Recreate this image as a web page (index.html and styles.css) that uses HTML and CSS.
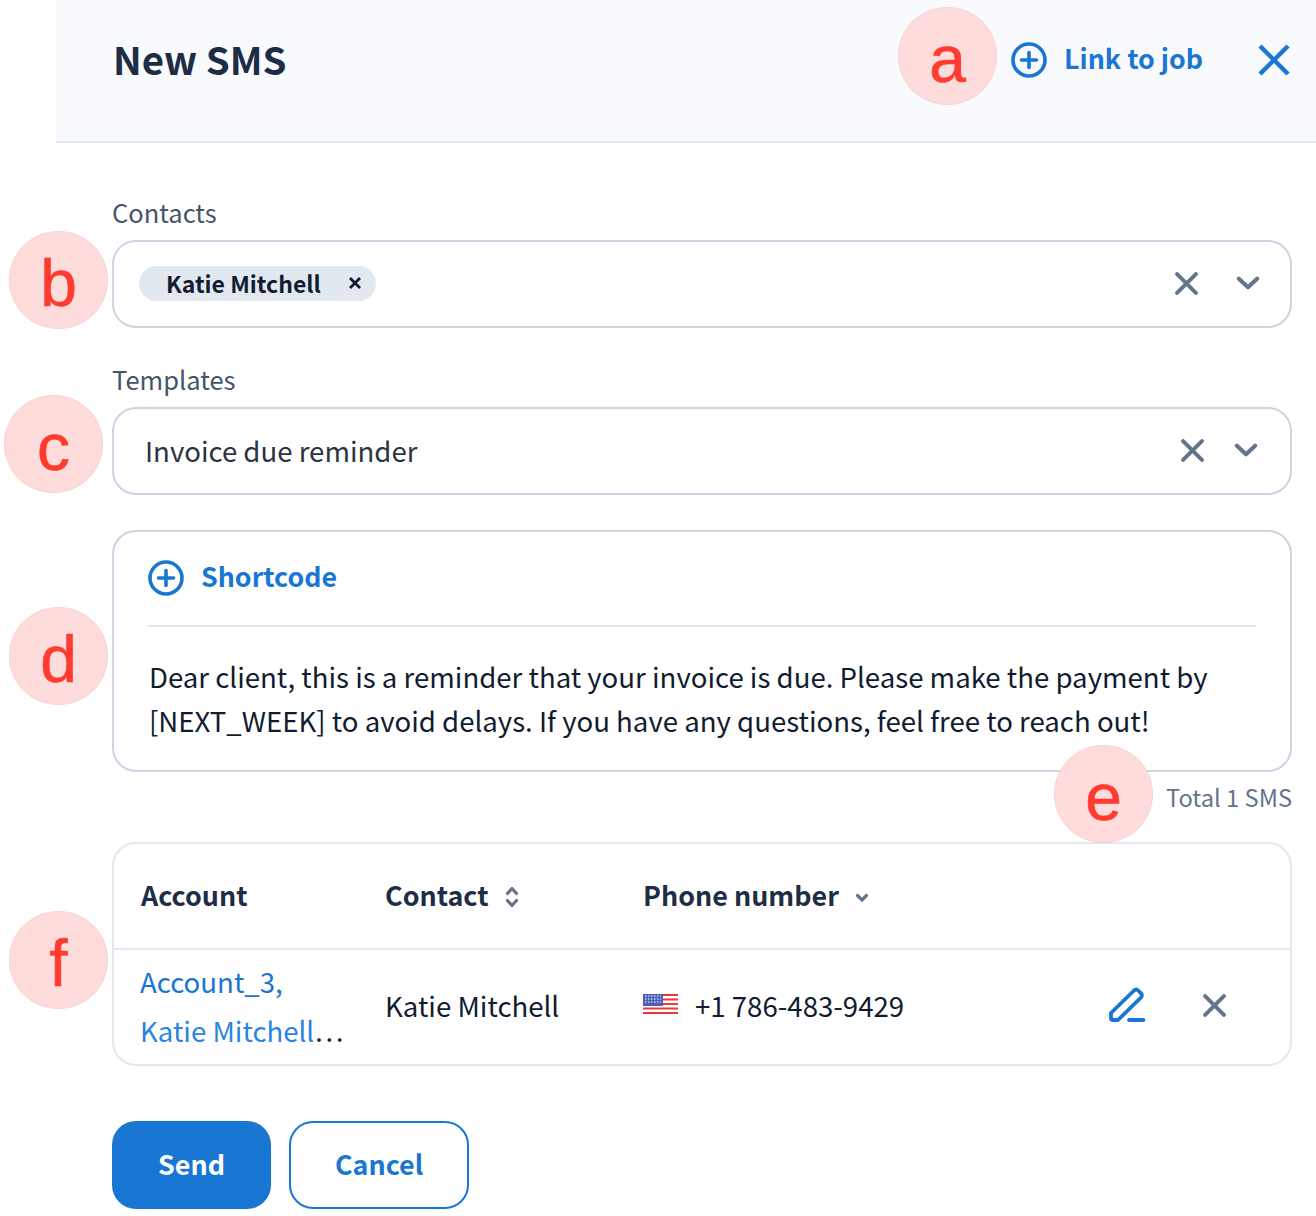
FILE: index.html
```html
<!DOCTYPE html>
<html lang="en">
<head>
    <meta charset="UTF-8">
    <meta name="viewport" content="width=device-width, initial-scale=1.0">
    <title>New SMS</title>
    <link rel="stylesheet" href="styles.css">
</head>
<body>
    <div class="page">
        <header class="header">
            <h1 class="title">New SMS</h1>
            <a class="link link-job">
                <svg class="plus-icon" viewBox="0 0 36 36"><circle cx="18" cy="18" r="16" fill="none" stroke="currentColor" stroke-width="3.6"/><path d="M18 10.5v15M10.5 18h15" fill="none" stroke="currentColor" stroke-width="3.6" stroke-linecap="round"/></svg>
                <span class="link-text">Link to job</span>
            </a>
            <svg class="close-icon" viewBox="0 0 32 32"><path d="M2 2l28 28M30 2L2 30" fill="none" stroke="currentColor" stroke-width="4.4"/></svg>
        </header>

        <main class="content">
            <label class="field-label">Contacts</label>
            <div class="select">
                <span class="chip">
                    <span>Katie Mitchell</span>
                    <svg class="chip-x" viewBox="0 0 14 14"><path d="M2 2l10 10M12 2L2 12" fill="none" stroke="currentColor" stroke-width="2.8"/></svg>
                </span>
                <svg class="x-icon x-contacts" viewBox="0 0 22 22"><path d="M2 2l18 18M20 2L2 20" fill="none" stroke="currentColor" stroke-width="3.8" stroke-linecap="round"/></svg>
                <svg class="chevron" viewBox="0 0 22 14"><path d="M2.500 2.500l8.500 8 8.500-8" fill="none" stroke="currentColor" stroke-width="3.800" stroke-linecap="round" stroke-linejoin="round"/></svg>
            </div>

            <label class="field-label field-label-second">Templates</label>
            <div class="select select-template">
                <span class="select-value">Invoice due reminder</span>
                <svg class="x-icon x-templates" viewBox="0 0 22 22"><path d="M2 2l18 18M20 2L2 20" fill="none" stroke="currentColor" stroke-width="3.8" stroke-linecap="round"/></svg>
                <svg class="chevron" viewBox="0 0 22 14"><path d="M2.500 2.500l8.500 8 8.500-8" fill="none" stroke="currentColor" stroke-width="3.800" stroke-linecap="round" stroke-linejoin="round"/></svg>
            </div>

            <div class="message">
                <a class="link link-shortcode">
                    <svg class="plus-icon" viewBox="0 0 36 36"><circle cx="18" cy="18" r="16" fill="none" stroke="currentColor" stroke-width="3.6"/><path d="M18 10.5v15M10.5 18h15" fill="none" stroke="currentColor" stroke-width="3.6" stroke-linecap="round"/></svg>
                    <span class="link-text">Shortcode</span>
                </a>
                <p class="message-text">Dear client, this is a reminder that your invoice is due. Please make the payment by [NEXT_WEEK] to avoid delays. If you have any questions, feel free to reach out!</p>
            </div>
            <div class="total">Total 1 SMS</div>

            <div class="table-wrap">
                <table class="table">
                    <thead>
                        <tr>
                            <th class="col-account">Account</th>
                            <th class="col-contact">Contact
                                <svg class="sort-icon" viewBox="0 0 14 24"><path d="M2.500 8.500L7 3.500l4.500 5M2.500 15.500L7 20.500l4.500-5" fill="none" stroke="currentColor" stroke-width="3.200" stroke-linecap="round" stroke-linejoin="round"/></svg>
                            </th>
                            <th class="col-phone">Phone number
                                <svg class="sort-down" viewBox="0 0 14 10"><path d="M2.500 2.500L7 7l4.500-4.500" fill="none" stroke="currentColor" stroke-width="3.200" stroke-linecap="round" stroke-linejoin="round"/></svg>
                            </th>
                            <th></th>
                        </tr>
                    </thead>
                    <tbody>
                        <tr>
                            <td class="account-cell">
                                <a class="account-line">Account_3,</a>
                                <div class="account-line account-second"><a>Katie Mitchell</a>…</div>
                            </td>
                            <td>Katie Mitchell</td>
                            <td>
                                <div class="phone">
                                    <svg class="flag" viewBox="0 0 35 22">
                                        <rect width="35" height="22" fill="#fff"/>
                                        <path d="M0 1h35M0 5.500h35M0 10h35M0 14.500h35M0 19h35" stroke="#ea3b3b" stroke-width="2"/>
                                        <rect y="0" width="20" height="12" fill="#4a5fb5"/>
                                        <path d="M2 2h16M2 5h16M2 8h16" stroke="#c9d0ee" stroke-width="1.400" stroke-dasharray="1.500 1.500"/>
                                    </svg>
                                    <span>+1 786-483-9429</span>
                                </div>
                            </td>
                            <td>
                                <div class="row-actions">
                                    <svg class="pencil" viewBox="0 0 38 36"><path d="M3 31.500V26L26 3.500c1.300-1.200 3-1.200 4.200 0l2.800 2.800c1.200 1.200 1.200 3 0 4.200L10 33H4.500c-.9 0-1.500-.6-1.500-1.500z" fill="none" stroke="currentColor" stroke-width="3.800" stroke-linejoin="round"/><path d="M21 33h14.500" fill="none" stroke="currentColor" stroke-width="3.800" stroke-linecap="round"/></svg>
                                    <svg class="x-icon" viewBox="0 0 22 22"><path d="M2 2l18 18M20 2L2 20" fill="none" stroke="currentColor" stroke-width="3.8" stroke-linecap="round"/></svg>
                                </div>
                            </td>
                        </tr>
                    </tbody>
                </table>
            </div>

            <div class="buttons">
                <button class="button button-primary">Send</button>
                <button class="button button-outline">Cancel</button>
            </div>
        </main>

        <span class="badge badge-a">a</span>
        <span class="badge badge-b">b</span>
        <span class="badge badge-c">c</span>
        <span class="badge badge-d">d</span>
        <span class="badge badge-e">e</span>
        <span class="badge badge-f">f</span>
    </div>
</body>
</html>
```

FILE: styles.css
```css
html, body {
    margin: 0;
    padding: 0;
    background-color: #fff;
}
body {
    font-family: "Noto Sans CJK SC", "Noto Sans", sans-serif;
    font-size: 27.6px;
    color: #111c30;
}
.page {
    position: relative;
    width: 1316px;
    height: 1216px;
    overflow: hidden;
}

/* header */
.header {
    display: flex;
    align-items: center;
    height: 143px;
    margin-left: 56px;
    padding: 0 26px 22px 57px;
    box-sizing: border-box;
    background-color: #f9fafe;
    border-bottom: 2px solid #e2e8f0;
}
.title {
    flex: 1;
    margin: 0 0 4px;
    font-size: 38.4px;
    line-height: 50px;
    font-weight: 600;
    color: #1e2d45;
}
.link {
    display: flex;
    align-items: center;
    color: #1976d2;
    font-weight: 600;
    font-size: 26.8px;
    line-height: 36px;
}
.link-text {
    margin-bottom: 3px;
}
.link-job {
    gap: 17px;
}
.plus-icon {
    flex: none;
    width: 36px;
    height: 36px;
}
.close-icon {
    flex: none;
    width: 32px;
    height: 32px;
    margin-left: 55px;
    color: #1976d2;
}

/* form */
.content {
    padding: 54px 24px 0 112px;
}
.field-label {
    display: block;
    font-size: 25.5px;
    line-height: 30px;
    margin-bottom: 13px;
    color: #44546a;
}
.field-label-second {
    margin-top: 36px;
}
.select {
    display: flex;
    align-items: center;
    height: 88px;
    box-sizing: border-box;
    padding: 0 30px 0 25px;
    border: 2px solid #cbd5e1;
    border-radius: 24px;
}
.select-template {
    padding-right: 32px;
}
.chip {
    display: flex;
    align-items: center;
    height: 35px;
    margin-bottom: 2px;
    padding: 0 14px 0 27px;
    border-radius: 18px;
    background-color: #e2e8f0;
    font-size: 23px;
    font-weight: 600;
    color: #111c30;
}
.chip-x {
    width: 14px;
    height: 14px;
    margin-left: 27px;
}
.select-value {
    padding: 0 0 2px 6px;
    color: #2b3440;
}
.x-icon {
    width: 23px;
    height: 23px;
    color: #64748b;
}
.x-contacts {
    margin-left: auto;
    margin-bottom: 2px;
}
.x-templates {
    margin-left: auto;
    margin-bottom: 2px;
}
.chevron {
    width: 24px;
    height: 15px;
    margin-left: 38px;
    margin-bottom: 2px;
    color: #64748b;
}
.select-template .chevron {
    margin-left: 30px;
}

/* message */
.message {
    margin-top: 35px;
    height: 242px;
    box-sizing: border-box;
    padding: 25px 34px 0 34px;
    border: 2px solid #cbd5e1;
    border-radius: 24px;
}
.link-shortcode {
    gap: 17px;
    height: 41px;
    padding-bottom: 27px;
    border-bottom: 2px solid #e2e8f0;
}
.message-text {
    margin: 0;
    padding-top: 27px;
    padding-left: 1px;
    line-height: 44px;
    color: #111c30;
}
.total {
    margin-top: 9px;
    text-align: right;
    font-size: 23.7px;
    line-height: 32px;
    color: #64748b;
}

/* table */
.table-wrap {
    margin-top: 29px;
    height: 224px;
    box-sizing: border-box;
    border: 2px solid #e2e8f0;
    border-radius: 24px;
    overflow: hidden;
}
.table {
    width: 100%;
    border-collapse: collapse;
    table-layout: fixed;
}
.table th {
    height: 100px;
    padding: 0 0 4px;
    text-align: left;
    font-weight: 600;
    font-size: 26.9px;
    color: #1e2d45;
    border-bottom: 2px solid #e2e8f0;
}
.table td {
    height: 110px;
    padding: 0 0 4px;
    vertical-align: middle;
}
.table th.col-account {
    width: 244px;
    padding-left: 27px;
}
.col-contact {
    width: 258px;
}
.col-phone {
    width: 440px;
}
.sort-icon {
    width: 14px;
    height: 24px;
    margin-left: 10px;
    vertical-align: -3px;
    color: #64748b;
}
.sort-down {
    width: 14px;
    height: 10px;
    margin-left: 10px;
    vertical-align: 3px;
    color: #64748b;
}
.table td.account-cell {
    padding: 0 0 2px 26px;
    color: #111c30;
}
.account-line {
    display: block;
    line-height: 49px;
    color: #1976d2;
    white-space: nowrap;
}
.account-second {
    color: #111c30;
}
.account-second a {
    color: #2a84e0;
}
.phone {
    display: flex;
    align-items: center;
    gap: 17px;
}
.flag {
    width: 35px;
    height: 22px;
}
.row-actions {
    display: flex;
    align-items: center;
    gap: 57px;
    padding-left: 25px;
}
.pencil {
    width: 38px;
    height: 36px;
    color: #1976d2;
}

/* buttons */
.buttons {
    display: flex;
    gap: 18px;
    margin-top: 55px;
}
.button {
    height: 88px;
    box-sizing: border-box;
    padding: 0 0 3px;
    font-family: inherit;
    font-size: 26.9px;
    font-weight: 600;
    border-radius: 24px;
    cursor: pointer;
}
.button-primary {
    width: 159px;
    border: none;
    background-color: #1976d2;
    color: #fff;
}
.button-outline {
    width: 180px;
    border: 2px solid #1976d2;
    background-color: #fff;
    color: #1976d2;
}

/* annotation badges */
.badge {
    position: absolute;
    width: 99px;
    height: 98px;
    box-sizing: border-box;
    display: flex;
    align-items: center;
    justify-content: center;
    padding-top: 5px;
    border: 1px solid #fbd0d0;
    border-radius: 50%;
    background-color: #fedcdc;
    font-family: "Liberation Sans", Arial, sans-serif;
    font-size: 66px;
    line-height: 1;
    color: #ff3b30;
    -webkit-text-stroke: 0.6px #ff3b30;
}
.badge-a { left: 898px; top: 7px; }
.badge-b { left: 9px; top: 231px; }
.badge-c { left: 4px; top: 395px; }
.badge-d { left: 9px; top: 607px; }
.badge-e { left: 1054px; top: 745px; }
.badge-f { left: 9px; top: 911px; }
```
